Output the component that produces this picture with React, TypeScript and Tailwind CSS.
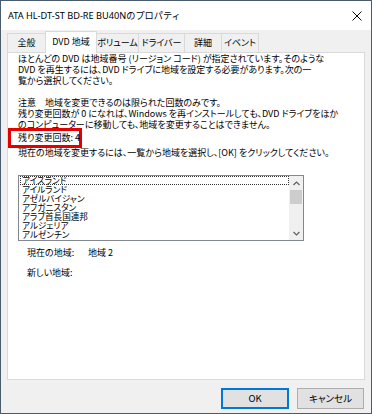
import React from "react";

const items = [
  "アイスランド",
  "アイルランド",
  "アゼルバイジャン",
  "アフガニスタン",
  "アラブ首長国連邦",
  "アルジェリア",
  "アルゼンチン",
  "アルバ",
];

export default function App() {
  return (
    <div className="w-[372px] h-[414px] border border-[#4b5b6e] bg-[#f0f0f0] flex flex-col overflow-hidden text-black font-['Noto_Sans_CJK_JP',sans-serif] [font-feature-settings:'palt']">
      {/* Title bar */}
      <div className="h-[29px] bg-white flex items-center justify-between pl-[7px] pr-[7px] shrink-0">
        <span className="text-[9.2px] font-['Noto_Sans','Noto_Sans_CJK_JP',sans-serif] [font-feature-settings:normal]">
          ATA HL-DT-ST BD-RE BU40Nのプロパティ
        </span>
        <svg width="10" height="10" viewBox="0 0 10 10" className="mr-[2px]">
          <path d="M0.5 0.5 L9.5 9.5 M9.5 0.5 L0.5 9.5" stroke="#111" strokeWidth="1" />
        </svg>
      </div>

      {/* Body */}
      <div className="flex-1 flex flex-col px-[6px]">
        {/* Tabs */}
        <div className="h-[22px] flex items-end text-[9px] whitespace-nowrap shrink-0">
          <div className="w-[38px] h-[19px] border-l border-t border-[#d9d9d9] flex items-center justify-center">全般</div>
          <div className="relative z-10 w-[52px] h-[22px] -mb-px border-l border-r border-t border-[#d9d9d9] bg-white flex items-center justify-center pb-[1px]">DVD 地域</div>
          <div className="w-[41px] h-[19px] border-t border-[#d9d9d9] flex items-center justify-center">ボリューム</div>
          <div className="w-[46px] h-[19px] border-l border-t border-[#d9d9d9] flex items-center justify-center">ドライバー</div>
          <div className="w-[37px] h-[19px] border-l border-t border-[#d9d9d9] flex items-center justify-center">詳細</div>
          <div className="w-[38px] h-[19px] border-l border-r border-t border-[#d9d9d9] flex items-center justify-center">イベント</div>
        </div>

        {/* Panel */}
        <div className="h-[328px] border border-[#d9d9d9] bg-white pl-[10px] text-[9px] leading-[11px] flex flex-col shrink-0">
          <div className="whitespace-nowrap">ほとんどの DVD は地域番号 (リージョン コード) が指定されています。そのような</div>
          <div className="whitespace-nowrap">DVD を再生するには、DVD ドライブに地域を設定する必要があります。次の一</div>
          <div className="whitespace-nowrap">覧から選択してください。</div>

          <div className="whitespace-nowrap mt-[11px]">注意　地域を変更できるのは限られた回数のみです。</div>
          <div className="whitespace-nowrap">残り変更回数が 0 になれば、Windows を再インストールしても、DVD ドライブをほか</div>
          <div className="whitespace-nowrap">のコンピューターに移動しても、地域を変更することはできません。</div>

          <div className="relative -mt-[2px] -ml-[10px] w-[74px] h-[20px] border-[3px] border-[#e50000] pl-[7px] pb-[2px] flex items-center whitespace-nowrap">
            残り変更回数: 4
          </div>

          <div className="whitespace-nowrap -mt-[1px]">現在の地域を変更するには、一覧から地域を選択し、[OK] をクリックしてください。</div>

          {/* Listbox */}
          <div className="mt-[17px] w-[286px] h-[66px] border border-[#828790] flex">
            <div className="flex-1 flex flex-col overflow-hidden pl-[1px] text-[8.6px] leading-[9px]">
              {items.map((it, i) => (
                <div
                  key={it}
                  className={
                    i === 0
                      ? "h-[9px] shrink-0 border border-dotted border-[#333] pl-[1px] flex items-center whitespace-nowrap"
                      : "h-[9px] shrink-0 pl-[2px] flex items-center whitespace-nowrap"
                  }
                >
                  {it}
                </div>
              ))}
            </div>
            <div className="w-[14px] bg-[#f0f0f0] flex flex-col items-center">
              <div className="h-[14px] w-full flex items-center justify-center">
                <svg width="7" height="5" viewBox="0 0 7 5">
                  <path d="M0.5 4 L3.5 1 L6.5 4" stroke="#606060" strokeWidth="1.2" fill="none" />
                </svg>
              </div>
              <div className="h-[14px] w-[12px] bg-[#cdcdcd]" />
              <div className="flex-1" />
              <div className="h-[14px] w-full flex items-center justify-center">
                <svg width="7" height="5" viewBox="0 0 7 5">
                  <path d="M0.5 1 L3.5 4 L6.5 1" stroke="#606060" strokeWidth="1.2" fill="none" />
                </svg>
              </div>
            </div>
          </div>

          <div className="mt-[6px] ml-[9px] flex whitespace-nowrap">
            <span className="w-[61px]">現在の地域:</span>
            <span>地域 2</span>
          </div>
          <div className="mt-[9px] ml-[9px] whitespace-nowrap">新しい地域:</div>
        </div>

        {/* Buttons */}
        <div className="mt-[8px] flex justify-end gap-[8px] pr-[1px] text-[9.5px]">
          <button className="w-[68px] h-[21px] bg-[#e1e1e1] border-2 border-[#0078d7] flex items-center justify-center">OK</button>
          <button className="w-[67px] h-[21px] bg-[#e1e1e1] border border-[#adadad] flex items-center justify-center">キャンセル</button>
        </div>
      </div>
    </div>
  );
}
